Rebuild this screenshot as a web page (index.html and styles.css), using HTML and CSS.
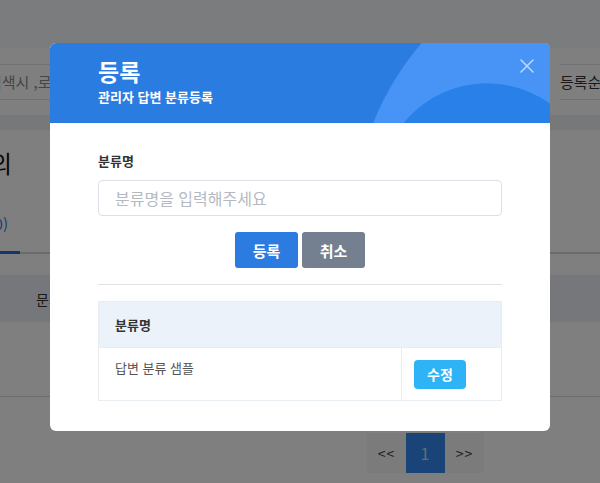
FILE: index.html
```html
<!DOCTYPE html>
<html lang="ko">
<head>
<meta charset="utf-8">
<title>분류 등록</title>
<link rel="stylesheet" href="styles.css">
</head>
<body>
<div class="page">
  <div class="topbar"></div>
  <div class="search">
    <div class="search-input">검색시 ,로그인 아이디</div>
    <div class="search-gap"></div>
    <div class="sort">등록순</div>
  </div>
  <div class="band"></div>
  <div class="title"><span>1:1 문의</span></div>
  <div class="tabs">
    <div class="tab"><span>전체(0)</span></div>
    <div class="tab-rest"></div>
  </div>
  <div class="thead"><span class="th">문의유형</span></div>
  <div class="trow"></div>
  <div class="pager">
    <span class="pg">&lt;&lt;</span>
    <span class="pg active">1</span>
    <span class="pg">&gt;&gt;</span>
  </div>
</div>

<div class="overlay">
  <div class="modal">
    <div class="modal-head">
      <div class="head-text">
        <div class="head-title">등록</div>
        <div class="head-sub">관리자 답변 분류등록</div>
      </div>
      <button class="close" type="button" aria-label="닫기">
        <svg width="14" height="14" viewBox="0 0 14 14"><path d="M1 1L13 13M13 1L1 13" stroke="currentColor" stroke-width="1.6" fill="none" stroke-linecap="round"/></svg>
      </button>
    </div>
    <div class="modal-body">
      <div class="label">분류명</div>
      <input class="input" type="text" placeholder="분류명을 입력해주세요">
      <div class="actions">
        <button class="btn btn-primary" type="button">등록</button>
        <button class="btn btn-gray" type="button">취소</button>
      </div>
      <div class="divider"></div>
      <table class="list">
        <thead>
          <tr><th colspan="2">분류명</th></tr>
        </thead>
        <tbody>
          <tr>
            <td class="name">답변 분류 샘플</td>
            <td class="act"><button class="edit" type="button">수정</button></td>
          </tr>
        </tbody>
      </table>
    </div>
  </div>
</div>
</body>
</html>
```

FILE: styles.css
```css
* { box-sizing: border-box; }
html, body { margin: 0; padding: 0; }
body {
  font-family: "Noto Sans CJK KR", "Noto Sans", sans-serif;
  background: #ffffff;
  color: #222;
  width: 600px;
  height: 483px;
  overflow: hidden;
}

/* underlying page */
.page { width: 600px; }
.topbar { height: 48px; background: #f4f8fd; }
.search {
  height: 67px;
  background: #ffffff;
  display: flex;
  align-items: center;
}
.search-input {
  height: 36px;
  width: 300px;
  margin-left: -12px;
  border-top: 1px solid #e2e2e2;
  border-bottom: 1px solid #e2e2e2;
  font-size: 15px;
  line-height: 34px;
  color: #8a8a8a;
  white-space: nowrap;
  overflow: hidden;
}
.search-gap { flex: 1; }
.sort {
  height: 36px;
  width: 60px;
  border-top: 1px solid #e2e2e2;
  border-bottom: 1px solid #e2e2e2;
  font-size: 15px;
  line-height: 34px;
  color: #333;
  white-space: nowrap;
  overflow: hidden;
  margin-right: -20px;
}
.band { height: 15px; background: #eef0f4; }
.title {
  height: 64px;
  display: flex;
  justify-content: flex-end;
  align-items: center;
  width: 12px;
  overflow: hidden;
  font-size: 24px;
  color: #111;
  white-space: nowrap;
}
.title span { flex: none; }
.tabs {
  display: flex;
  height: 60px;
  border-bottom: 2px solid #d6d6d6;
}
.tab {
  width: 20px;
  border-bottom: 3px solid #2a6ad6;
  margin-bottom: -2px;
  display: flex;
  justify-content: flex-end;
  align-items: center;
  padding-right: 12px;
  padding-top: 2px;
  overflow: hidden;
  font-size: 15px;
  color: #3a78f0;
  white-space: nowrap;
}
.tab span { flex: none; }
.tab-rest { flex: 1; }
.thead {
  margin-top: 21px;
  height: 47px;
  background: #eaeff5;
  padding-left: 36px;
  display: flex;
  align-items: center;
}
.th { font-size: 14px; color: #333; white-space: nowrap; }
.trow {
  height: 75px;
  border-bottom: 1px solid #dcdcdc;
}
.pager {
  display: flex;
  padding-left: 367px;
  margin-top: 36px;
}
.pg {
  width: 39px;
  height: 40px;
  display: flex;
  align-items: center;
  justify-content: center;
  background: #f6f6f6;
  font-size: 14px;
  color: #333;
  letter-spacing: 1px;
}
.pg.active { background: #3489f0; color: #ccd9ee; font-size: 16px; }

/* overlay + modal */
.overlay {
  position: fixed;
  inset: 0;
  background: rgba(0, 0, 0, 0.5);
  display: flex;
  justify-content: center;
  align-items: flex-start;
  padding-top: 43px;
}
.modal {
  width: 500px;
  background: #ffffff;
  border-radius: 6px;
  overflow: hidden;
}
.modal-head {
  height: 80px;
  display: flex;
  justify-content: space-between;
  align-items: flex-start;
  padding: 14px 16px 0 48px;
  background:
    radial-gradient(circle 108px at 437px 148px, #2a80e9 99.3%, rgba(42,128,233,0) 100%),
    radial-gradient(circle 288px at 590px 187px, #4894f6 99.6%, rgba(72,148,246,0) 100%),
    #2b7ce1;
  color: #ffffff;
}
.head-title {
  font-size: 23px;
  font-weight: 700;
  line-height: 28px;
}
.head-sub {
  font-size: 13px;
  font-weight: 700;
  line-height: 18px;
  margin-top: 3px;
}
.close {
  margin-top: 2px;
  width: 14px;
  height: 14px;
  padding: 0;
  border: 0;
  background: none;
  color: rgba(255, 255, 255, 0.62);
  display: flex;
}
.modal-body {
  padding: 28px 48px 30px;
}
.label {
  font-size: 13px;
  font-weight: 700;
  color: #333;
  line-height: 20px;
}
.input {
  display: block;
  width: 100%;
  height: 36px;
  margin-top: 9px;
  border: 1px solid #dcdfe5;
  border-radius: 4px;
  padding: 0 16px;
  font-family: inherit;
  font-size: 16px;
  color: #333;
  outline: none;
}
.input::placeholder { color: #b4b9c1; }
.actions {
  display: flex;
  justify-content: center;
  gap: 4px;
  margin-top: 16px;
}
.btn {
  width: 63px;
  height: 36px;
  border: 0;
  border-radius: 3px;
  font-family: inherit;
  font-size: 15px;
  font-weight: 700;
  color: #ffffff;
  padding: 0;
}
.btn-primary { background: #2c7be1; }
.btn-gray { background: #747f90; }
.divider {
  height: 1px;
  background: #dfe3e8;
  margin-top: 16px;
}
.list {
  width: 100%;
  margin-top: 16px;
  border-collapse: collapse;
  border: 1px solid #e8edf2;
}
.list th {
  height: 46px;
  background: #ecf2fa;
  text-align: left;
  padding: 0 16px;
  font-size: 13px;
  font-weight: 700;
  color: #333;
}
.list td {
  height: 53px;
  border-top: 1px solid #e8edf2;
}
.list td.name {
  width: 303px;
  padding: 10px 16px 0;
  vertical-align: top;
  font-size: 13px;
  color: #555;
  border-right: 1px solid #e8edf2;
}
.list td.act {
  padding: 0 12px;
  vertical-align: middle;
}
.edit {
  width: 52px;
  height: 29px;
  border: 0;
  border-radius: 4px;
  background: #2db3f6;
  color: #ffffff;
  font-family: inherit;
  font-size: 14px;
  font-weight: 700;
  padding: 0;
  display: block;
}
```
